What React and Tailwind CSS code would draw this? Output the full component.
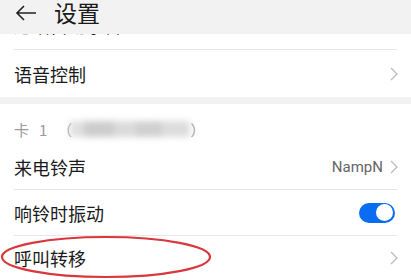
import React from "react";

const font = { fontFamily: '"Noto Sans CJK SC", "Noto Sans", sans-serif' };

function Chevron() {
  return (
    <svg width="8" height="14" viewBox="0 0 8 14" className="shrink-0">
      <path d="M1 1 L7 7 L1 13" fill="none" stroke="#b8b8b8" strokeWidth="1.2" />
    </svg>
  );
}

export default function App() {
  return (
    <div className="w-[411px] h-[280px] overflow-hidden bg-white relative text-[#1a1a1a]" style={font}>
      {/* header */}
      <div className="h-[34px] bg-[#f2f2f2] flex items-center pl-[15px] pb-[9px]">
        <svg width="22" height="16" viewBox="0 0 22 16" className="shrink-0">
          <path d="M21 8 H2 M9 1 L2 8 L9 15" fill="none" stroke="#222" strokeWidth="1.6" />
        </svg>
        <span className="ml-[17px] text-[23px] leading-none">设置</span>
      </div>
      {/* partially hidden row */}
      <div className="mx-[14px] h-[16px] overflow-hidden border-b border-[#e6e6e6] flex justify-between">
        <span className="text-[18px] leading-none -mt-[18px]">通话自动录音</span>
        <span className="text-[15px] leading-none -mt-[16px] text-[#888] mr-[12px]">已关闭</span>
      </div>
      {/* 语音控制 */}
      <div className="mx-[14px] h-[47px] flex items-center justify-between">
        <span className="text-[18px] leading-none">语音控制</span>
        <span className="mr-[-1px]"><Chevron /></span>
      </div>
      <div className="h-[7px] bg-[#f2f2f2]" />
      {/* section header */}
      <div className="mx-[14px] h-[41px] flex items-center pt-[9px] text-[15px] text-[#9a9a9a] leading-none">
        <span>卡</span>
        <span className="ml-[10px]">1</span>
        <span className="ml-[10px]">（</span>
        <div className="ml-[-2px] w-[120px] h-[16px] flex blur-[3px]">
          <div className="w-[14px] bg-[#e0e0e0]" />
          <div className="w-[30px] bg-[#cccccc]" />
          <div className="w-[22px] bg-[#dadada]" />
          <div className="w-[26px] bg-[#d0d0d0]" />
          <div className="w-[28px] bg-[#dddddd]" />
        </div>
        <span className="ml-[0px]">）</span>
      </div>
      {/* 来电铃声 */}
      <div className="mx-[14px] h-[45px] flex items-center justify-between border-b border-[#e6e6e6]">
        <span className="text-[18px] leading-none">来电铃声</span>
        <div className="flex items-center gap-[7px]">
          <span className="text-[15px] leading-none text-[#666]" style={{ fontFamily: '"Roboto", "Noto Sans", sans-serif' }}>NampN</span>
          <span className="mr-[-1px]"><Chevron /></span>
        </div>
      </div>
      {/* 响铃时振动 */}
      <div className="mx-[14px] h-[46px] flex items-center justify-between border-b border-[#e6e6e6]">
        <span className="text-[18px] leading-none">响铃时振动</span>
        <div className="w-[36px] h-[20px] rounded-full bg-[#0a6cf0] flex items-center justify-end pr-[2px] mr-[2px]">
          <div className="w-[17px] h-[17px] rounded-full bg-white" />
        </div>
      </div>
      {/* 呼叫转移 */}
      <div className="mx-[14px] h-[44px] flex items-center justify-between">
        <span className="text-[18px] leading-none">呼叫转移</span>
        <span className="mr-[-1px]"><Chevron /></span>
      </div>
      <svg className="absolute left-0 top-[234px]" width="214" height="46" viewBox="0 0 214 46">
        <ellipse cx="106" cy="23" rx="104" ry="20" fill="none" stroke="#d9363e" strokeWidth="2.2" />
      </svg>
    </div>
  );
}
